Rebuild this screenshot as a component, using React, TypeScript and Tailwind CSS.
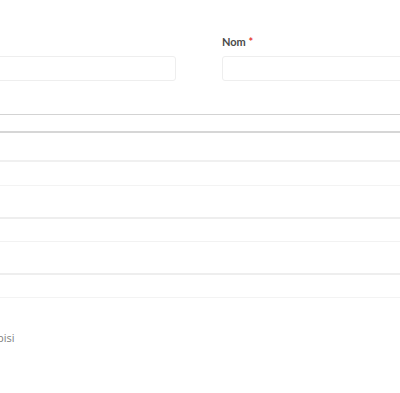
import React from 'react';

const rows = [
  { h: 'h-[29px]', border: 'border-b-2 border-[#f0f0f0]' },
  { h: 'h-[24px]', border: 'border-b border-[#f3f3f3]' },
  { h: 'h-[33px]', border: 'border-b-2 border-[#eeeeee]' },
  { h: 'h-[23px]', border: 'border-b border-[#f2f2f2]' },
  { h: 'h-[33px]', border: 'border-b-2 border-[#eeeeee]' },
  { h: 'h-[23px]', border: 'border-b border-[#f3f3f3]' },
];

export default function App() {
  return (
    <div className="w-[400px] h-[393px] overflow-hidden bg-white" style={{ fontFamily: 'Lato, "Open Sans", sans-serif' }}>
      <div className="ml-[-24px] w-[448px] pt-[35px] grid grid-cols-[200px_200px] gap-x-[46px]">
        <div>
          <div className="h-[14px] mb-[7px]" />
          <input className="w-full h-[25px] border border-[#eeeeee] rounded-[3px] bg-white outline-none" />
        </div>
        <div>
          <label className="block h-[14px] mb-[7px] text-[11px] leading-[14px] font-bold text-[#4a4a4a]">
            Nom <span className="text-[#e53935]">*</span>
          </label>
          <input className="w-full h-[25px] border border-[#eeeeee] rounded-[3px] bg-white outline-none" />
        </div>
      </div>

      <div className="mt-[33px] w-[400px]">
        <div className="h-[19px] border-t border-[#d3d3d3] border-b-2 border-b-[#d6d6d6] bg-white" />
        {rows.map((r, i) => (
          <div key={i} className={`${r.h} ${r.border} bg-white`} />
        ))}
      </div>

      <p className="mt-[33px] ml-[-3px] text-[11px] leading-[14px] text-[#808080]" style={{ fontFamily: '"Open Sans", sans-serif' }}>
        bisi
      </p>
    </div>
  );
}
